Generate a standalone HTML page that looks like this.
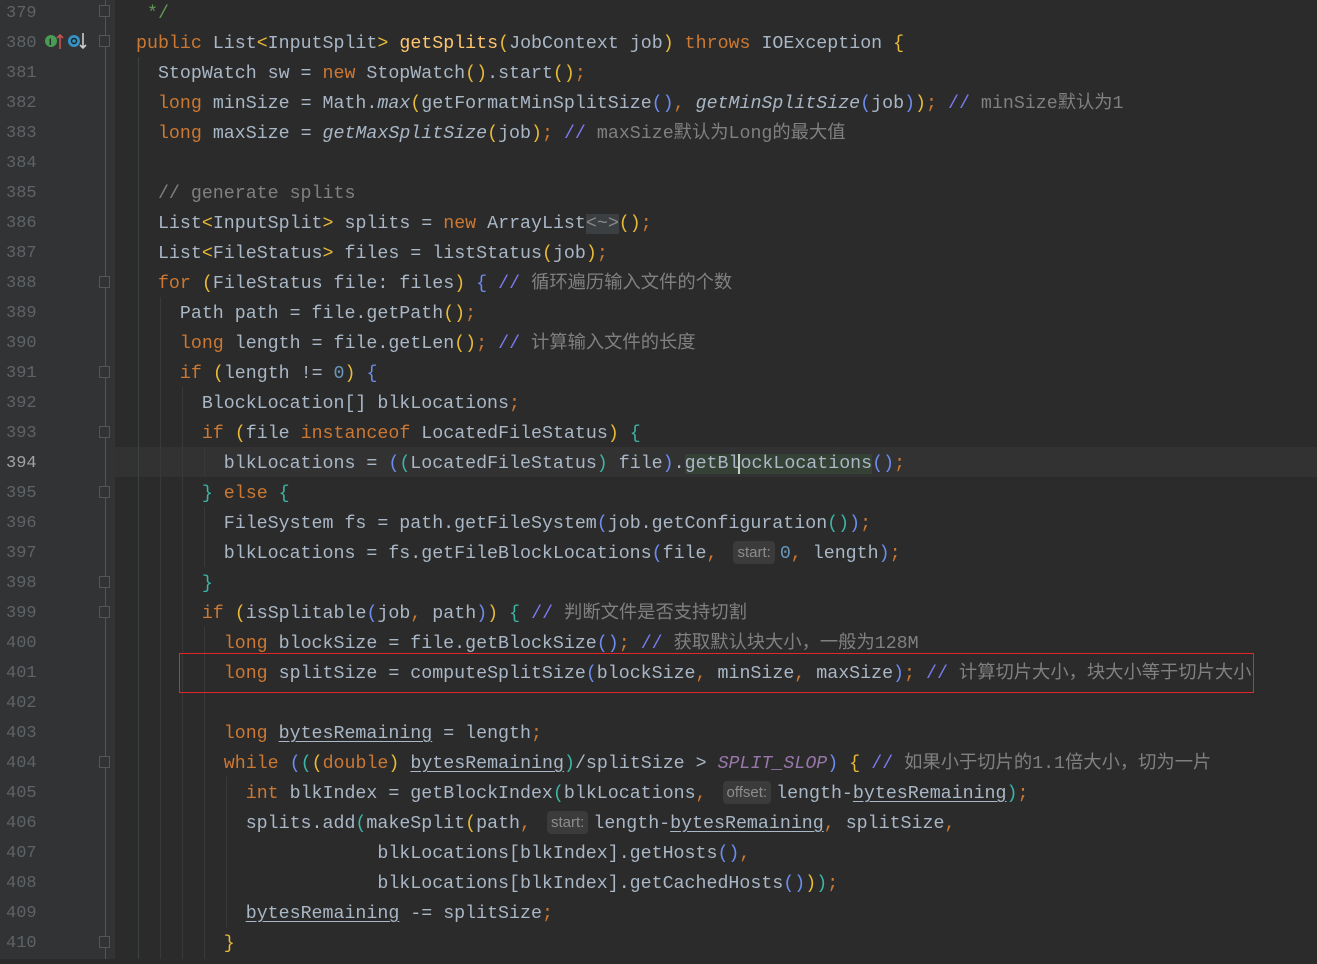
<!DOCTYPE html>
<html><head><meta charset="utf-8"><style>
html,body{margin:0;padding:0;background:#2b2b2b;width:1317px;height:959px;overflow:hidden}
.g{position:absolute;left:0;top:0;width:115px;height:959px;background:#313335}
.fl{position:absolute;left:105px;top:0;width:1px;height:959px;background:#555}
.ln{position:absolute;left:6px;width:32px;font:17px "Liberation Mono",monospace;color:#606366;height:30px;line-height:30px}
.cur{position:absolute;left:115px;top:447px;width:1202px;height:30px;background:#323232}
.l{position:absolute;left:136px;height:30px;line-height:30px;font:18.3px "Liberation Mono","Noto Sans CJK SC",monospace;color:#a9b7c6;white-space:pre}
.l span{line-height:10px}
.k{color:#cc7832}.c{color:#808080;font-family:"Liberation Mono","Noto Sans CJK SC",monospace}.s{color:#7a7aee}
.y{color:#e8ba36}.b{color:#6c8cf0}.t{color:#3bb5a5}.i{font-style:italic}.p{color:#9876aa;font-style:italic}
.u{text-decoration:underline;text-underline-offset:3px}.cm{color:#629755}
.h{font:15px "Liberation Sans",sans-serif;color:#8c8c8c;background:#3b3b3b;border-radius:4px;padding:3px 4px 3px 4px;margin:0 5px;position:relative;top:-1px}
.ig{position:absolute;width:1px;background:#393939}
.fm{position:absolute;left:99px;width:11px;height:12px;border:1px solid #555;background:#313335;box-sizing:border-box}
.box{position:absolute;left:179px;top:653px;width:1075px;height:40px;border:1px solid #e0282a;box-sizing:border-box}
.hl{background:#3c3f41}
</style></head><body>
<div class="g"></div>
<div class="fl"></div>
<div class="cur"></div>
<div class="ig" style="left:138px;top:57px;height:902px;background:#3b453b"></div>
<div class="ig" style="left:160px;top:297px;height:662px"></div>
<div class="ig" style="left:182px;top:387px;height:572px"></div>
<div class="ig" style="left:204px;top:447px;height:30px"></div>
<div class="ig" style="left:204px;top:507px;height:60px"></div>
<div class="ig" style="left:204px;top:627px;height:332px"></div>
<div class="ig" style="left:226px;top:777px;height:150px"></div>

<div class="fm" style="top:5px"></div><div class="fm" style="top:35px"></div>
<div class="fm" style="top:276px"></div><div class="fm" style="top:366px"></div>
<div class="fm" style="top:426px"></div><div class="fm" style="top:486px"></div>
<div class="fm" style="top:576px"></div><div class="fm" style="top:606px"></div>
<div class="fm" style="top:756px"></div><div class="fm" style="top:936px"></div>

<svg style="position:absolute;left:44px;top:31px" width="44" height="22">
<circle cx="7" cy="10" r="6" fill="#499c54"/><text x="5" y="14" font-size="9" font-family="Liberation Sans" fill="#222" font-weight="bold">I</text>
<path d="M16 18V4M13 7l3-3 3 3" stroke="#c75450" stroke-width="1.6" fill="none"/>
<circle cx="30" cy="10" r="6" fill="#3592c4"/><circle cx="30" cy="10" r="2.5" fill="none" stroke="#222" stroke-width="1.4"/>
<path d="M39 2v15M36 14l3 3 3-3" stroke="#ccc" stroke-width="1.6" fill="none"/>
</svg>

<div class="box"></div>

<div class="ln" style="top:-1px">379</div><div class="ln" style="top:29px">380</div><div class="ln" style="top:59px">381</div><div class="ln" style="top:89px">382</div><div class="ln" style="top:119px">383</div><div class="ln" style="top:149px">384</div><div class="ln" style="top:179px">385</div><div class="ln" style="top:209px">386</div><div class="ln" style="top:239px">387</div><div class="ln" style="top:269px">388</div><div class="ln" style="top:299px">389</div><div class="ln" style="top:329px">390</div><div class="ln" style="top:359px">391</div><div class="ln" style="top:389px">392</div><div class="ln" style="top:419px">393</div><div class="ln" style="top:449px;color:#a4a3a3">394</div><div class="ln" style="top:479px">395</div><div class="ln" style="top:509px">396</div><div class="ln" style="top:539px">397</div><div class="ln" style="top:569px">398</div><div class="ln" style="top:599px">399</div><div class="ln" style="top:629px">400</div><div class="ln" style="top:659px">401</div><div class="ln" style="top:689px">402</div><div class="ln" style="top:719px">403</div><div class="ln" style="top:749px">404</div><div class="ln" style="top:779px">405</div><div class="ln" style="top:809px">406</div><div class="ln" style="top:839px">407</div><div class="ln" style="top:869px">408</div><div class="ln" style="top:899px">409</div><div class="ln" style="top:929px">410</div>

<div class="l" style="top:4px"><span class="cm"> */</span></div>
<div class="l" style="top:34px"><span class="k">public</span> List<span class="y">&lt;</span>InputSplit<span class="y">&gt;</span> <span style="color:#ffc66d">getSplits</span><span class="y">(</span>JobContext job<span class="y">)</span> <span class="k">throws</span> IOException <span class="y">{</span></div>
<div class="l" style="top:64px">  StopWatch sw = <span class="k">new</span> StopWatch<span class="y">()</span>.start<span class="y">()</span><span class="k">;</span></div>
<div class="l" style="top:94px">  <span class="k">long</span> minSize = Math.<span class="i">max</span><span class="y">(</span>getFormatMinSplitSize<span class="b">()</span><span class="k">,</span> <span class="i">getMinSplitSize</span><span class="b">(</span>job<span class="b">)</span><span class="y">)</span><span class="k">;</span> <span class="s">//</span><span class="c"> minSize默认为1</span></div>
<div class="l" style="top:124px">  <span class="k">long</span> maxSize = <span class="i">getMaxSplitSize</span><span class="y">(</span>job<span class="y">)</span><span class="k">;</span> <span class="s">//</span><span class="c"> maxSize默认为Long的最大值</span></div>
<div class="l" style="top:184px"><span class="c">  // generate splits</span></div>
<div class="l" style="top:214px">  List<span class="y">&lt;</span>InputSplit<span class="y">&gt;</span> splits = <span class="k">new</span> ArrayList<span class="hl" style="color:#888">&lt;~&gt;</span><span class="y">()</span><span class="k">;</span></div>
<div class="l" style="top:244px">  List<span class="y">&lt;</span>FileStatus<span class="y">&gt;</span> files = listStatus<span class="y">(</span>job<span class="y">)</span><span class="k">;</span></div>
<div class="l" style="top:274px">  <span class="k">for</span> <span class="y">(</span>FileStatus file: files<span class="y">)</span> <span class="b">{</span> <span class="s">//</span><span class="c"> 循环遍历输入文件的个数</span></div>
<div class="l" style="top:304px">    Path path = file.getPath<span class="y">()</span><span class="k">;</span></div>
<div class="l" style="top:334px">    <span class="k">long</span> length = file.getLen<span class="y">()</span><span class="k">;</span> <span class="s">//</span><span class="c"> 计算输入文件的长度</span></div>
<div class="l" style="top:364px">    <span class="k">if</span> <span class="y">(</span>length != <span style="color:#6897bb">0</span><span class="y">)</span> <span class="b">{</span></div>
<div class="l" style="top:394px">      BlockLocation[] blkLocations<span class="k">;</span></div>
<div class="l" style="top:424px">      <span class="k">if</span> <span class="y">(</span>file <span class="k">instanceof</span> LocatedFileStatus<span class="y">)</span> <span class="t">{</span></div>
<div class="l" style="top:454px">        blkLocations = <span class="b">(</span><span class="t">(</span>LocatedFileStatus<span class="t">)</span> file<span class="b">)</span>.<span style="background:#344134">getBl</span><span style="border-left:2px solid #ccc;margin-left:-1px;background:#344134">ockLocations</span><span class="b">()</span><span class="k">;</span></div>
<div class="l" style="top:484px">      <span class="t">}</span> <span class="k">else</span> <span class="t">{</span></div>
<div class="l" style="top:514px">        FileSystem fs = path.getFileSystem<span class="b">(</span>job.getConfiguration<span class="t">()</span><span class="b">)</span><span class="k">;</span></div>
<div class="l" style="top:544px">        blkLocations = fs.getFileBlockLocations<span class="b">(</span>file<span class="k">,</span> <span class="h">start:</span><span style="color:#6897bb">0</span><span class="k">,</span> length<span class="b">)</span><span class="k">;</span></div>
<div class="l" style="top:574px">      <span class="t">}</span></div>
<div class="l" style="top:604px">      <span class="k">if</span> <span class="y">(</span>isSplitable<span class="b">(</span>job<span class="k">,</span> path<span class="b">)</span><span class="y">)</span> <span class="t">{</span> <span class="s">//</span><span class="c"> 判断文件是否支持切割</span></div>
<div class="l" style="top:634px">        <span class="k">long</span> blockSize = file.getBlockSize<span class="b">()</span><span class="k">;</span> <span class="s">//</span><span class="c"> 获取默认块大小，一般为128M</span></div>
<div class="l" style="top:664px">        <span class="k">long</span> splitSize = computeSplitSize<span class="b">(</span>blockSize<span class="k">,</span> minSize<span class="k">,</span> maxSize<span class="b">)</span><span class="k">;</span> <span class="s">//</span><span class="c"> 计算切片大小，块大小等于切片大小</span></div>
<div class="l" style="top:724px">        <span class="k">long</span> <span class="u">bytesRemaining</span> = length<span class="k">;</span></div>
<div class="l" style="top:754px">        <span class="k">while</span> <span class="b">(</span><span class="t">(</span><span class="y">(</span><span class="k">double</span><span class="y">)</span> <span class="u">bytesRemaining</span><span class="t">)</span>/splitSize &gt; <span class="p">SPLIT_SLOP</span><span class="b">)</span> <span class="y">{</span> <span class="s">//</span><span class="c"> 如果小于切片的1.1倍大小，切为一片</span></div>
<div class="l" style="top:784px">          <span class="k">int</span> blkIndex = getBlockIndex<span class="t">(</span>blkLocations<span class="k">,</span> <span class="h">offset:</span>length-<span class="u">bytesRemaining</span><span class="t">)</span><span class="k">;</span></div>
<div class="l" style="top:814px">          splits.add<span class="t">(</span>makeSplit<span class="y">(</span>path<span class="k">,</span> <span class="h">start:</span>length-<span class="u">bytesRemaining</span><span class="k">,</span> splitSize<span class="k">,</span></div>
<div class="l" style="top:844px">                      blkLocations[blkIndex].getHosts<span class="b">()</span><span class="k">,</span></div>
<div class="l" style="top:874px">                      blkLocations[blkIndex].getCachedHosts<span class="b">()</span><span class="y">)</span><span class="t">)</span><span class="k">;</span></div>
<div class="l" style="top:904px">          <span class="u">bytesRemaining</span> -= splitSize<span class="k">;</span></div>
<div class="l" style="top:934px">        <span class="y">}</span></div>
</body></html>
